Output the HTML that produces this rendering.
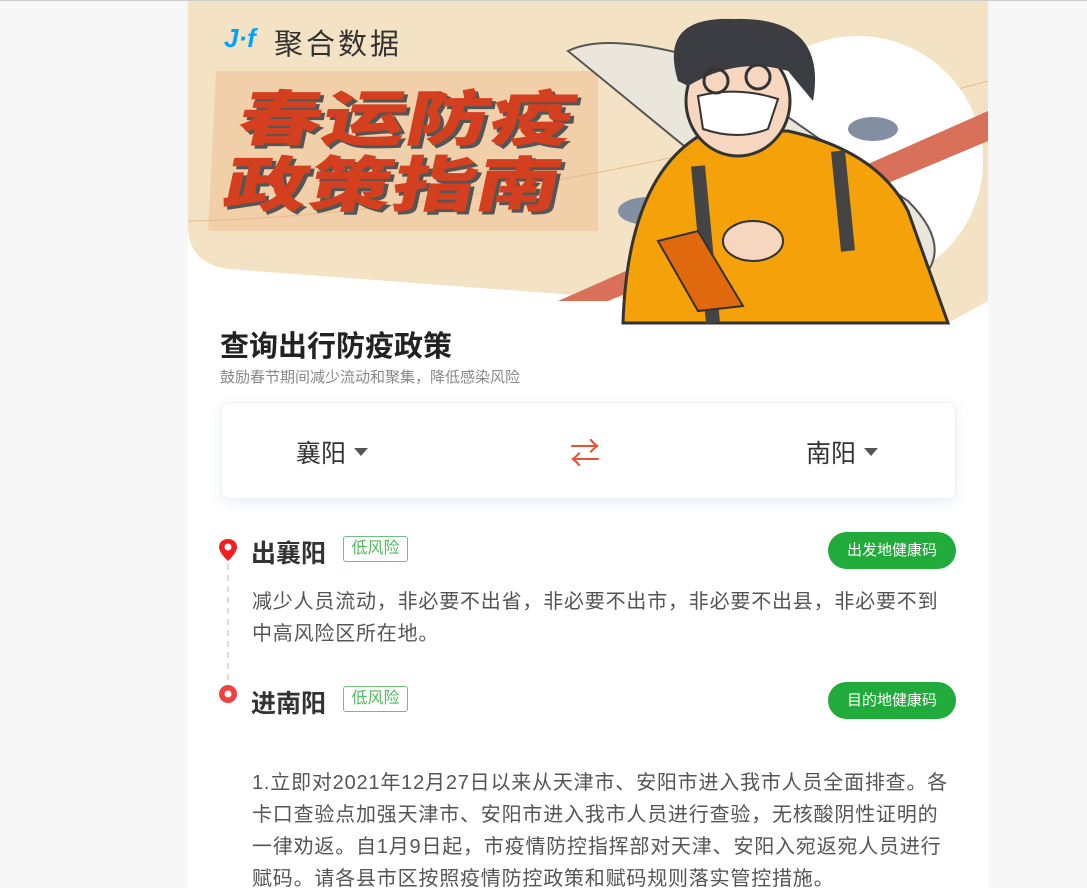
<!DOCTYPE html>
<html><head><meta charset="utf-8"><style>
*{margin:0;padding:0;box-sizing:border-box}
body{width:1087px;height:888px;overflow:hidden;background:#f7f7f7;font-family:"Liberation Sans","Noto Sans CJK SC",sans-serif;border-top:1px solid #ccc}
.page{position:absolute;left:188px;top:1px;width:800px;height:887px;background:#fff;overflow:hidden}
.abs{position:absolute}
.h1{left:32px;top:322px;font-size:29px;font-weight:bold;color:#222}
.sub{left:32px;top:365px;font-size:15px;color:#888}
.card{left:33px;top:401px;width:735px;height:97px;border:1px solid #eef0f5;border-radius:8px;box-shadow:0 4px 12px rgba(180,190,220,.25);background:#fff}
.city{font-size:25px;color:#333;top:31px}
.tri{display:inline-block;width:0;height:0;border-left:7px solid transparent;border-right:7px solid transparent;border-top:8px solid #555;vertical-align:middle;margin-left:8px;margin-top:-6px}
.st{font-size:25px;font-weight:bold;color:#333;left:63px}
.tag{left:155px;width:65px;height:26px;border:1px solid #6cc27a;border-radius:3px;color:#4fb95e;font-size:16px;text-align:center;line-height:24px}
.btn{left:640px;width:128px;height:37px;border-radius:19px;background:#21ab3a;color:#fff;font-size:15px;text-align:center;line-height:37px}
.txt{left:64px;font-size:20px;letter-spacing:0.8px;color:#555;white-space:nowrap}
</style></head><body>
<div class="page">
<svg class="abs" style="left:0;top:0" width="800" height="330" viewBox="0 0 800 330">
<path d="M0 0H800V300L760 322 40 268Q0 262 0 225Z" fill="#f3e3c4"/>
<path d="M28 70H410V230H20Z" fill="#f0cfa9"/>
<path d="M0 220Q300 215 800 80" stroke="#e8b88a" fill="none"/>
<circle cx="670" cy="160" r="125" fill="#fff"/>
<path d="M370 300L800 110V140L420 300Z" fill="#d9705a"/>
<path d="M380 50Q420 30 520 60L720 200Q760 240 740 270L600 230Z" fill="#eae6dc" stroke="#555" stroke-width="2"/>
<ellipse cx="460" cy="210" rx="30" ry="14" fill="#8390a3"/>
<ellipse cx="685" cy="128" rx="25" ry="12" fill="#8390a3"/>
<path d="M435 322Q440 170 520 130L600 130Q690 150 720 210L760 322Z" fill="#f4a10a" stroke="#333" stroke-width="3"/>
<path d="M510 165L525 322M650 150L660 250" stroke="#444" stroke-width="14"/>
<path d="M470 240L510 230L555 305L510 310Z" fill="#e0690e" stroke="#333" stroke-width="2"/>
<ellipse cx="565" cy="240" rx="30" ry="20" fill="#f7d6c0" stroke="#333" stroke-width="2"/>
<ellipse cx="550" cy="100" rx="52" ry="55" fill="#f7d6c0" stroke="#333" stroke-width="3"/>
<path d="M490 80Q470 15 545 18Q640 15 625 100L600 70Q550 55 500 85Z" fill="#3b3d42"/>
<path d="M510 95Q550 85 590 98L580 128Q550 140 515 128Z" fill="#fff" stroke="#333" stroke-width="2"/>
<circle cx="528" cy="80" r="12" fill="none" stroke="#333" stroke-width="3"/>
<circle cx="570" cy="76" r="12" fill="none" stroke="#333" stroke-width="3"/>
</svg>
<div class="abs" style="left:36px;top:22px;font-size:26px;color:#00a4ff;font-weight:bold;font-style:italic">J·f</div>
<div class="abs" style="left:86px;top:20px;font-size:29px;color:#333;letter-spacing:3px">聚合数据</div>
<div class="abs" style="left:58px;top:86px;font-size:60px;line-height:66px;font-weight:900;color:#d43f1f;text-shadow:3px 3px 0 #555;transform:skewX(-12deg) scaleX(1.4);transform-origin:left top;white-space:nowrap">春运防疫<br>政策指南</div>
<div class="abs h1">查询出行防疫政策</div>
<div class="abs sub">鼓励春节期间减少流动和聚集，降低感染风险</div>
<div class="abs card">
<div class="abs city" style="left:74px">襄阳<span class="tri"></span></div>
<div class="abs" style="left:348px;top:26px;font-size:30px;color:#e8502e">⇄</div>
<div class="abs city" style="left:584px">南阳<span class="tri"></span></div>
</div>
<svg class="abs" style="left:30px;top:537px" width="20" height="170">
<path d="M10 1C4 1 1 5 1 9C1 15 10 23 10 23C10 23 19 15 19 9C19 5 16 1 10 1Z" fill="#f02020"/><circle cx="10" cy="9" r="3.5" fill="#fff"/>
<line x1="10" y1="26" x2="10" y2="147" stroke="#ddd" stroke-width="2" stroke-dasharray="6 5"/>
<circle cx="10" cy="156" r="9" fill="#f04040"/><circle cx="10" cy="156" r="3.5" fill="#fff"/>
</svg>
<div class="abs st" style="top:533px">出襄阳</div>
<div class="abs tag" style="top:535px">低风险</div>
<div class="abs btn" style="top:531px">出发地健康码</div>
<div class="abs txt" style="top:585px;line-height:32px">减少人员流动，非必要不出省，非必要不出市，非必要不出县，非必要不到<br>中高风险区所在地。</div>
<div class="abs st" style="top:683px">进南阳</div>
<div class="abs tag" style="top:685px">低风险</div>
<div class="abs btn" style="top:681px">目的地健康码</div>
<div class="abs txt" style="top:766px;line-height:32px">1.立即对2021年12月27日以来从天津市、安阳市进入我市人员全面排查。各<br>卡口查验点加强天津市、安阳市进入我市人员进行查验，无核酸阴性证明的<br>一律劝返。自1月9日起，市疫情防控指挥部对天津、安阳入宛返宛人员进行<br>赋码。请各县市区按照疫情防控政策和赋码规则落实管控措施。</div>
</div>
</body></html>
